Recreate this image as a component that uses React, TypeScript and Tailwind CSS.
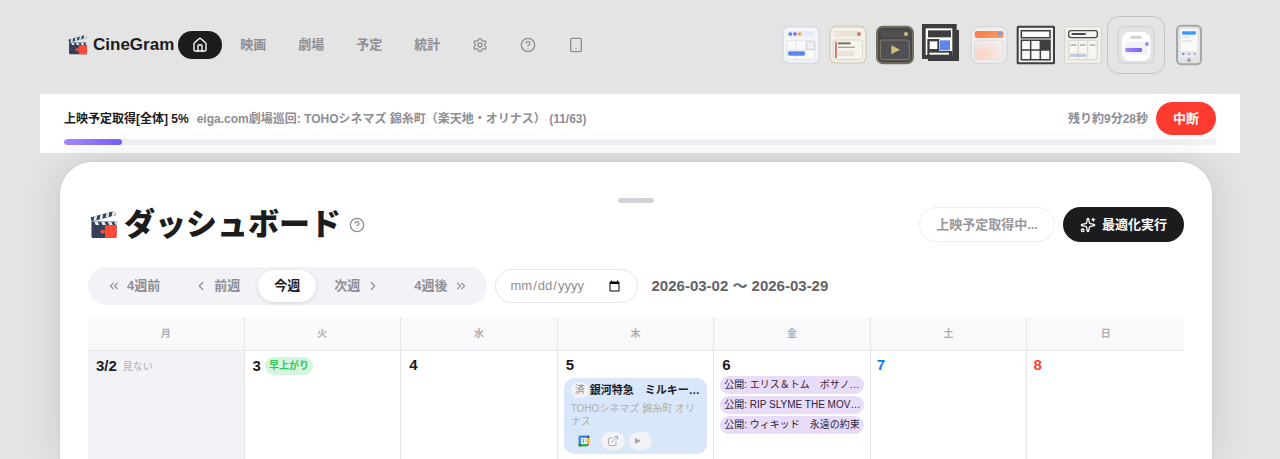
import React from "react";
import {
  ChevronLeft,
  ChevronRight,
  ChevronsLeft,
  ChevronsRight,
  CircleHelp,
  ExternalLink,
  House,
  Settings,
  Sparkles,
  Tablet,
} from "lucide-react";

function Clapper({ className }: { className: string }) {
  return (
    <svg viewBox="0 0 28 29" className={className} aria-hidden="true">
      <g transform="rotate(-15 1 10)">
        <rect x="1" y="6.5" width="26" height="4.5" rx="0.6" fill="#33415a" />
        <path d="M5 6.5h3l-2 4.5H3zM11.500 6.500h3l-2 4.500h-3zM18 6.500h3l-2 4.500h-3zM24.500 6.500h2.500v2l-1 2.500h-3.500z" fill="#e8ecf2" />
      </g>
      <path d="M1 11h26v15.500a1.500 1.500 0 0 1-1.500 1.500h-23A1.500 1.500 0 0 1 1 26.500z" fill="#33415a" />
      <path d="M4 11.200h3.500l1.500 3.300H5.500zM11 11.200h3.500l1.500 3.300h-3.500zM18 11.200h3.500l1.500 3.300h-3.500zM24.500 11.200H27v3.300h-1z" fill="#e8ecf2" />
      <path d="M15 14.700h12v11.800a1.500 1.500 0 0 1-1.500 1.500H15v-5.500c-1 0-1.500.8-2.800.8a2 2 0 1 1 0-4c1.300 0 1.800.8 2.800.8z" fill="#ff4a36" />
    </svg>
  );
}

function GoogleCalendar() {
  return (
    <svg viewBox="0 0 24 24" className="size-3" aria-hidden="true">
      <path d="M1 3a2 2 0 0 1 2-2h15v5H6v12H1z" fill="#4285f4" />
      <path d="M18 1h3a2 2 0 0 1 2 2v3h-5z" fill="#1967d2" />
      <path d="M18 6h5v12h-5z" fill="#fbbc04" />
      <path d="M6 18h12v5H6z" fill="#34a853" />
      <path d="M1 18h5v5H3a2 2 0 0 1-2-2z" fill="#188038" />
      <path d="M18 18h5l-5 5z" fill="#ea4335" />
      <path d="M6 6h12v12H6z" fill="#fff" />
      <path d="M8.500 9h2.500v6H8.500M11 12H9M14 9.500l1.500-.8V15.500" fill="none" stroke="#4285f4" strokeWidth="1.500" />
    </svg>
  );
}

const themes: { name: string; art: React.ReactNode }[] = [
  {
    name: "クラシック",
    art: (
      <>
        <rect x="6" y="5" width="108" height="110" rx="17" fill="#f5f6fa" stroke="#d9dce5" strokeWidth="5" />
        <rect x="17" y="18" width="85" height="18" rx="6" fill="#e8ebf8" />
        <circle cx="28" cy="27" r="5.500" fill="#5584e8" />
        <circle cx="42" cy="27" r="5.500" fill="#8265e8" />
        <circle cx="56" cy="27" r="5.500" fill="#f0a93a" />
        <rect x="17" y="46" width="86" height="58" rx="7" fill="#fafafa" stroke="#e2e4e9" strokeWidth="3" />
        <path d="M46 46v58M74 46v58M17 75h86" stroke="#e2e4e9" strokeWidth="3" />
        <rect x="77" y="50" width="23" height="23" rx="5" fill="#f1f2f5" stroke="#d5d8df" strokeWidth="4" />
        <rect x="21" y="79" width="51" height="13" rx="5" fill="#5b86ea" />
      </>
    ),
  },
  {
    name: "ペーパー",
    art: (
      <>
        <rect x="6" y="5" width="108" height="109" rx="17" fill="#f4f2ec" stroke="#d9d0c0" strokeWidth="5" />
        <rect x="17" y="18" width="84" height="18" rx="6" fill="#ebe5d9" />
        <circle cx="93" cy="27" r="6" fill="#cf806b" />
        <rect x="16" y="45" width="88" height="59" rx="7" fill="#f7f4ef" stroke="#d9d3c6" strokeWidth="3" />
        <path d="M24 50v49" stroke="#cf806b" strokeWidth="6" />
        <path d="M30 55h38" stroke="#77716a" strokeWidth="6" />
        <path d="M30 67h51" stroke="#aaa298" strokeWidth="4" />
        <rect x="30" y="78" width="49" height="15" rx="3" fill="#ebe2d4" />
      </>
    ),
  },
  {
    name: "シアター",
    art: (
      <>
        <rect x="6" y="5" width="108" height="110" rx="18" fill="#474747" stroke="#746e5e" strokeWidth="6" />
        <rect x="17" y="17" width="86" height="20" rx="7" fill="#4f4f50" />
        <circle cx="93" cy="27" r="6" fill="#d5bd72" />
        <rect x="16" y="45" width="87" height="59" rx="7" fill="#505055" stroke="#858069" strokeWidth="3" />
        <path d="M49 61l26 13-26 14z" fill="#d5bd72" />
      </>
    ),
  },
  {
    name: "ブルータル",
    art: (
      <>
        <path d="M0-3h104v18h7v93H18v-6H0z" fill="#3d3d3d" />
        <path d="M11 10h80v80H11z" fill="#fff" />
        <path d="M18 16h69v21H18z" fill="#3d3d3d" />
        <path d="M16 42h36v38H16z" fill="#3d3d3d" />
        <path d="M23 49h23v23H23z" fill="#fff" />
        <path d="M54 46h30v30H54z" fill="#5b86ea" />
        <path d="M16 78h75v12H16z" fill="#3d3d3d" />
        <path d="M22 86h59" stroke="#fff" strokeWidth="6" />
      </>
    ),
  },
  {
    name: "サンセット",
    art: (
      <>
        <defs>
          <linearGradient id="sunset-bar" x2="1" y2=".4">
            <stop stopColor="#fa7a43" />
            <stop offset="1" stopColor="#fa9864" />
          </linearGradient>
          <radialGradient id="sunset-body" cx=".25" cy=".75" r=".8">
            <stop stopColor="#fad0c0" />
            <stop offset="1" stopColor="#f3efef" />
          </radialGradient>
        </defs>
        <rect x="6" y="5" width="108" height="110" rx="24" fill="#f0f0f3" stroke="#d8dade" strokeWidth="5" />
        <rect x="17" y="18" width="87" height="21" rx="7" fill="url(#sunset-bar)" />
        <circle cx="93" cy="26" r="6" fill="#6e9ee6" />
        <rect x="17" y="46" width="86" height="58" rx="8" fill="url(#sunset-body)" stroke="#dddde2" strokeWidth="3" />
      </>
    ),
  },
  {
    name: "グリッド",
    art: (
      <>
        <rect x="5" y="5" width="109" height="110" rx="2" fill="#efefef" stroke="#3e3e3e" strokeWidth="6" />
        <path d="M16 17h86v21H16zM16 46h86v58H16zM44 46v58M73 46v58M16 75h86" fill="#fafafa" stroke="#3e3e3e" strokeWidth="4.500" />
        <path d="M73 46h29v29H73z" fill="#3e3e3e" />
      </>
    ),
  },
  {
    name: "カンバン",
    art: (
      <>
        <rect x="5" y="5" width="110" height="110" rx="4" fill="#f1f1ed" stroke="#dad8cf" strokeWidth="4" />
        <rect x="17" y="17" width="86" height="21" rx="7" fill="#f4f4f2" stroke="#494949" strokeWidth="4" />
        <path d="M26 27h42" stroke="#494949" strokeWidth="6" />
        <rect x="17" y="46" width="86" height="58" rx="4" fill="#f5f5f1" stroke="#dad8cf" strokeWidth="4" />
        <path d="M46 46v58M74 46v58" stroke="#dad8cf" strokeWidth="4" />
        <path d="M23 60h17M51 60h17M81 60h16" stroke="#bdbdb8" strokeWidth="6" />
        <rect x="21" y="86" width="49" height="10" rx="4" fill="#c4c5df" />
      </>
    ),
  },
  {
    name: "シート",
    art: (
      <>
        <defs>
          <linearGradient id="sheet-bar">
            <stop stopColor="#a088f8" />
            <stop offset="1" stopColor="#7c5cf5" />
          </linearGradient>
        </defs>
        <rect x="6" y="5" width="108" height="110" rx="18" fill="#e5e5e8" stroke="#d6d6dd" strokeWidth="6" />
        <rect x="18" y="21" width="85" height="86" rx="23" fill="#fff" />
        <rect x="42" y="32" width="36" height="10" rx="5" fill="#d3d3d8" />
        <rect x="26" y="51" width="70" height="39" rx="10" fill="#f2f2f7" />
        <rect x="28" y="69" width="50" height="12" rx="4" fill="url(#sheet-bar)" />
        <circle cx="93" cy="57" r="6" fill="#a088f8" />
      </>
    ),
  },
  {
    name: "モバイル",
    art: (
      <>
        <rect x="24" y="2" width="72" height="116" rx="13" fill="#e3e4e6" stroke="#a6a7ab" strokeWidth="6" />
        <rect x="35" y="13" width="50" height="82" rx="3" fill="#fafafa" />
        <path d="M35 78h50v17H35z" fill="#e9e9ed" />
        <rect x="39" y="19" width="42" height="10" rx="4" fill="#3d96fb" />
        <rect x="39" y="34" width="25" height="6" rx="3" fill="#e5e6ea" />
        <rect x="39" y="45" width="33" height="6" rx="3" fill="#e5e6ea" />
        <circle cx="43" cy="87" r="3.500" fill="#3d96fb" />
        <circle cx="60" cy="87" r="3.500" fill="#aaaab0" />
        <circle cx="77" cy="87" r="3.500" fill="#aaaab0" />
        <circle cx="60" cy="106" r="6" fill="#a6a7ab" />
      </>
    ),
  },
];

const navItem = "flex h-7 items-center rounded-full px-3.5";
const rangeItem = "flex h-8 items-center gap-1.5 rounded-full px-4";

function Header() {
  return (
    <header className="flex items-center justify-between px-7 pt-4 pb-5">
      <div className="flex items-center gap-1">
        <a href="#top" className="flex items-center gap-[5px] text-[17px] font-bold text-[#1c1c1e]">
          <Clapper className="size-5" />
          CineGram
        </a>
        <nav className="flex items-center gap-1 text-[13px] font-bold text-[#8e8e93]">
          <a href="#home" aria-label="ホーム" className={`${navItem} bg-[#1c1c1e] text-white`}>
            <House size={16} />
          </a>
          <a href="#movies" className={navItem}>映画</a>
          <a href="#theaters" className={navItem}>劇場</a>
          <a href="#plans" className={navItem}>予定</a>
          <a href="#stats" className={navItem}>統計</a>
          <a href="#settings" aria-label="設定" className={navItem}><Settings size={16} /></a>
          <a href="#help" aria-label="ヘルプ" className={navItem}><CircleHelp size={16} /></a>
          <a href="#tablet" aria-label="タブレット" className={navItem}><Tablet size={16} /></a>
        </nav>
      </div>
      <div className="flex items-center gap-px">
        {themes.map((t) => (
          <button
            key={t.name}
            type="button"
            aria-label={t.name}
            className={
              t.name === "シート"
                ? "flex size-[58px] items-center justify-center rounded-xl border border-[#c2c2c4]"
                : "flex h-[58px] w-[46px] items-center justify-center"
            }
          >
            <svg viewBox="0 0 120 120" className="size-10 overflow-visible">{t.art}</svg>
          </button>
        ))}
      </div>
    </header>
  );
}

function Progress() {
  return (
    <section className="bg-white px-6 py-2">
      <div className="mb-1 flex items-center gap-2 text-xs font-bold text-[#8e8e93]">
        <span className="text-[#1c1c1e]">上映予定取得[全体] 5%</span>
        <span className="flex-1">eiga.com劇場巡回: TOHOシネマズ 錦糸町（楽天地・オリナス） (11/63)</span>
        <span>残り約9分28秒</span>
        <button type="button" className="h-[33px] rounded-full bg-[#ff3b30] px-[17px] text-[13px] font-bold text-white">
          中断
        </button>
      </div>
      <div role="progressbar" aria-valuenow={5} aria-label="取得の進み具合" className="h-1.5 overflow-hidden rounded-full bg-[#f2f2f7]">
        <div className="h-full w-[5%] rounded-full bg-linear-to-r from-[#a78bfa] to-[#7c5cfc]" />
      </div>
    </section>
  );
}

const weekdays = ["月", "火", "水", "木", "金", "土", "日"];
const releases = ["公開: エリス＆トム　ボサノ…", "公開: RIP SLYME THE MOV…", "公開: ウィキッド　永遠の約束"];
const cell = "h-[108px] border-r border-[#e5e5ea] px-1.5 pt-1 align-top last:border-r-0";
const day = "px-0.5 text-[15px] leading-5 font-bold";

function Calendar() {
  return (
    <div className="overflow-hidden rounded-t-lg">
      <table className="w-full table-fixed border-separate border-spacing-0">
        <thead>
          <tr>
            {weekdays.map((d) => (
              <th key={d} className="h-[34px] border-r border-b border-[#e5e5ea] bg-[#f9f9fb] p-0 text-[10px] font-bold text-[#aeaeb2] last:border-r-0">
                {d}
              </th>
            ))}
          </tr>
        </thead>
        <tbody>
          <tr>
            <td className={`${cell} bg-[#f2f2f7]`}>
              <div className="flex h-[22px] items-center gap-1">
                <span className={day}>3/2</span>
                <span className="text-[10px] text-[#aeaeb2]">見ない</span>
              </div>
            </td>
            <td className={cell}>
              <div className="flex h-[22px] items-center gap-0.5">
                <span className={day}>3</span>
                <span className="rounded-full bg-[#d6f5de] px-1 text-[10px] leading-[18px] font-bold text-[#34c759]">早上がり</span>
              </div>
            </td>
            <td className={cell}><div className={day}>4</div></td>
            <td className={cell}>
              <div className={day}>5</div>
              <div className="mt-[3px] rounded-[10px] bg-[#d8e8fa] px-[7px] py-1">
                <div className="flex items-center gap-px whitespace-nowrap">
                  <span className="rounded-full bg-[#f2f2f7] px-1 text-[10px] leading-4 text-[#8e8e93]">済</span>
                  <span className="text-[11px] leading-4 font-bold">銀河特急　ミルキー…</span>
                </div>
                <div className="mt-1 text-[10px] leading-[13px] text-[#aeaeb2]">TOHOシネマズ 錦糸町 オリナス</div>
                <div className="mt-1 flex gap-1 text-[#aeaeb2]">
                  <button type="button" aria-label="Googleカレンダーに追加" className="flex h-[18px] w-[26px] items-center justify-center">
                    <GoogleCalendar />
                  </button>
                  <button type="button" aria-label="開く" className="flex h-[18px] w-6 items-center justify-center rounded-full bg-[#f2f2f7]">
                    <ExternalLink size={12} />
                  </button>
                  <button type="button" aria-label="再生" className="flex h-[18px] w-[23px] items-center rounded-full bg-[#f2f2f7] pl-1.5">
                    <svg viewBox="0 0 6 6" className="size-1.5"><path d="M0 0l6 3-6 3z" fill="#a5a5aa" /></svg>
                  </button>
                </div>
              </div>
            </td>
            <td className={cell}>
              <div className={day}>6</div>
              <ul className="mt-px flex flex-col gap-0.5">
                {releases.map((r) => (
                  <li key={r} className="overflow-hidden rounded-full bg-[#e9dcf9] px-1 text-[10px] leading-[18px] whitespace-nowrap text-[#2a1f3d]">
                    {r}
                  </li>
                ))}
              </ul>
            </td>
            <td className={cell}><div className="text-[15px] leading-5 font-bold text-[#007aff]">7</div></td>
            <td className={cell}><div className="text-[15px] leading-5 font-bold text-[#ff3b30]">8</div></td>
          </tr>
        </tbody>
      </table>
    </div>
  );
}

function Dashboard() {
  return (
    <main className="relative mt-[9px] mr-7 ml-5 flex-1 rounded-t-[32px] bg-white px-7 pt-9 shadow-[0_0_40px_rgba(0,0,0,0.12),0_0_2px_rgba(0,0,0,0.15)]">
      <div className="mx-auto mb-1 h-[5px] w-9 rounded-full bg-[#d1d1d6]" />
      <div className="flex h-[35px] items-center gap-2 text-[13px] font-bold">
        <h1 className="flex items-center gap-1 text-[31px] leading-9 font-black">
          <Clapper className="size-8 p-0.5" />
          ダッシュボード
        </h1>
        <button type="button" aria-label="ヘルプ" className="mr-auto text-[#8e8e93]"><CircleHelp size={16} /></button>
        <button type="button" disabled className="h-[35px] rounded-full border border-[#ededf0] px-4 font-bold text-[#98989d]">
          上映予定取得中...
        </button>
        <button type="button" className="flex h-[35px] items-center gap-1.5 rounded-full bg-[#1c1c1e] px-[17px] text-white">
          <Sparkles size={16} />
          最適化実行
        </button>
      </div>
      <div className="mt-[25px] mb-3 flex items-center gap-2">
        <div className="flex gap-0.5 rounded-full bg-[#f2f2f7] p-[3px] text-[13px] font-bold text-[#8e8e93]">
          <button type="button" className={rangeItem}><ChevronsLeft size={14} />4週前</button>
          <button type="button" className={rangeItem}><ChevronLeft size={14} />前週</button>
          <button type="button" className={`${rangeItem} bg-white text-[#1c1c1e] shadow-[0_1px_4px_rgba(0,0,0,0.12)]`}>今週</button>
          <button type="button" className={rangeItem}>次週<ChevronRight size={14} /></button>
          <button type="button" className={rangeItem}>4週後<ChevronsRight size={14} /></button>
        </div>
        <input
          type="date"
          aria-label="開始日"
          className="h-[34px] w-[143px] rounded-full border border-[#e5e5ea] px-3.5 text-[13px] text-[#8e8e93]"
        />
        <p className="pl-1.5 text-[15px] font-bold text-[#636366]">2026-03-02 〜 2026-03-29</p>
      </div>
      <Calendar />
    </main>
  );
}

export default function App() {
  return (
    <div
      lang="ja"
      className="flex min-h-screen flex-col overflow-hidden bg-[#e4e4e4] px-10 font-['Liberation_Sans','Noto_Sans_CJK_JP',sans-serif] text-[#1c1c1e]"
    >
      <Header />
      <Progress />
      <Dashboard />
    </div>
  );
}
